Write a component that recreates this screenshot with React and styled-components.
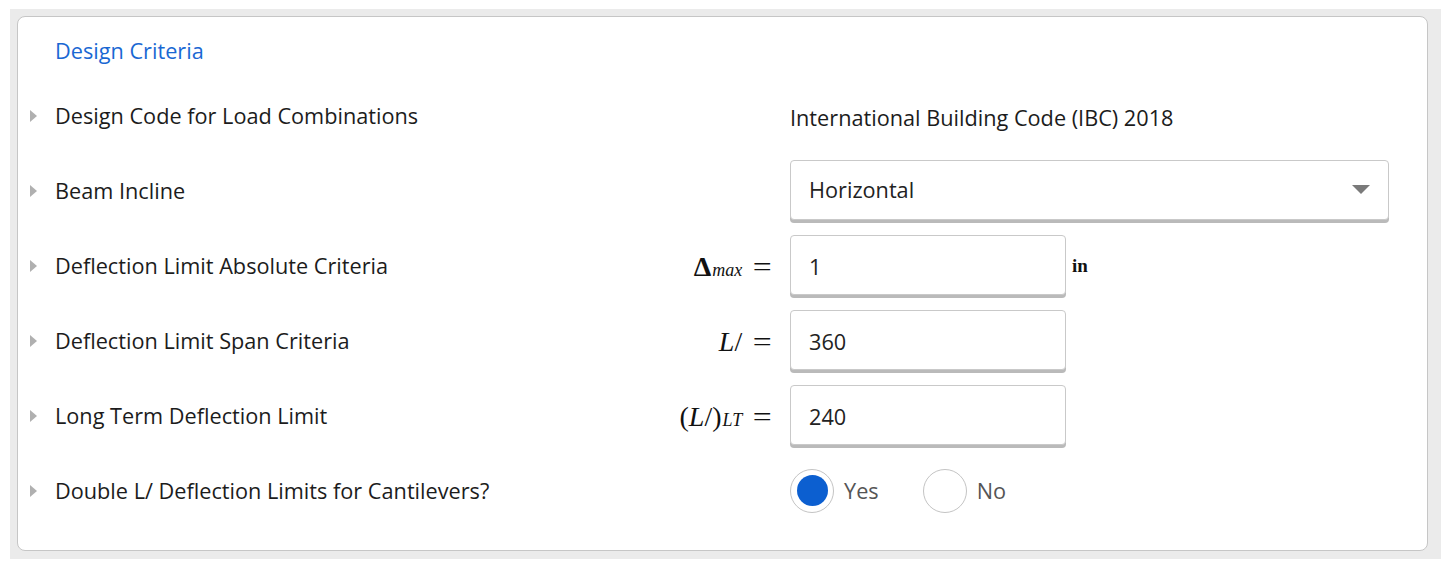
import React from "react";
import styled, { createGlobalStyle } from "styled-components";

const Global = createGlobalStyle`
  html, body { margin: 0; padding: 0; background: #fff; }
  body { font-family: "Open Sans", "Noto Sans", sans-serif; }
`;

const Outer = styled.div`
  margin: 9px 0 0 10px;
  width: 1431px;
  height: 550px;
  box-sizing: border-box;
  background: #ebebeb;
  padding: 7px 13px 8px 7px;
`;

const Card = styled.section`
  box-sizing: border-box;
  height: 535px;
  background: #fff;
  border: 1px solid #c6c6c6;
  border-radius: 8px;
  padding: 19px 38px 0 0;
`;

const Title = styled.h2`
  margin: 0 0 12px 37px;
  font-size: 21.7px;
  line-height: 30px;
  font-weight: 400;
  color: #1a68d3;
`;

const Row = styled.div`
  display: grid;
  grid-template-columns: 37px 517px 218px 599px;
  height: 75px;
  align-items: center;
`;

const Arrow = styled.span`
  justify-self: start;
  margin-left: 12px;
  width: 0;
  height: 0;
  border-top: 6px solid transparent;
  border-bottom: 6px solid transparent;
  border-left: 7px solid #b0b0b0;
`;

const Label = styled.div`
  font-size: 21.7px;
  color: #1c1c1c;
  line-height: 28px;
`;

const Math = styled.div`
  justify-self: end;
  margin-right: 18px;
  font-family: "Liberation Serif", "DejaVu Serif", serif;
  font-size: 28px;
  color: #111;
  white-space: nowrap;
  display: flex;
  align-items: baseline;
  margin-top: 2px;
`;

const Ital = styled.i`
  font-style: italic;
`;

const Sub = styled.sub`
  font-size: 18px;
  font-style: italic;
  vertical-align: -5px;
  line-height: 0;
  margin-left: 1px;
`;

const Eq = styled.span`
  margin-left: 14px;
  display: inline-block;
  transform: scaleX(1.2);
  transform-origin: right center;
`;

const Control = styled.div`
  grid-column: 4;
  display: flex;
  align-items: center;
`;

const ValueText = styled.div`
  font-size: 21.7px;
  color: #1c1c1c;
  margin-top: 4px;
`;

const Box = styled.div`
  box-sizing: border-box;
  width: ${(p) => p.$w}px;
  height: 60px;
  border: 1px solid #c9c9c9;
  border-radius: 4px;
  box-shadow: 0 3px 0 #bababa;
  background: #fff;
  display: flex;
  align-items: center;
  justify-content: space-between;
  padding: 0 18px 0 18px;
  font-size: 21.7px;
  color: #222;
  margin-top: ${(p) => p.$mt || 0}px;
`;

const BoxText = styled.span`
  padding-top: ${(p) => p.$pt || 0}px;
`;

const Caret = styled.span`
  width: 0;
  height: 0;
  border-left: 9px solid transparent;
  border-right: 9px solid transparent;
  border-top: 9px solid #7a7a7a;
`;

const Unit = styled.span`
  font-family: "Liberation Serif", "DejaVu Serif", serif;
  font-weight: 700;
  font-size: 19px;
  color: #111;
  margin-left: 6px;
  align-self: flex-start;
  margin-top: 18px;
`;

const RadioGroup = styled.div`
  display: flex;
  align-items: center;
`;

const RadioOpt = styled.label`
  display: flex;
  align-items: center;
  margin-right: 44px;
  font-size: 21.7px;
  color: #555;
`;

const Circle = styled.span`
  box-sizing: border-box;
  width: 44px;
  height: 44px;
  border-radius: 50%;
  border: 1px solid #c4c4c4;
  background: #fff;
  display: flex;
  align-items: center;
  justify-content: center;
  margin-right: 10px;
  &::after {
    content: "";
    display: ${(p) => (p.$checked ? "block" : "none")};
    width: 31px;
    height: 31px;
    border-radius: 50%;
    background: #0c5fd0;
  }
`;

const rows = [
  { label: "Design Code for Load Combinations", kind: "text", value: "International Building Code (IBC) 2018" },
  { label: "Beam Incline", kind: "select", value: "Horizontal" },
  {
    label: "Deflection Limit Absolute Criteria",
    kind: "input",
    value: "1",
    unit: "in",
    math: (
      <>
        <b>Δ</b>
        <Sub>max</Sub>
        <Eq>=</Eq>
      </>
    ),
  },
  {
    label: "Deflection Limit Span Criteria",
    kind: "input",
    value: "360",
    math: (
      <>
        <Ital>L</Ital>/<Eq>=</Eq>
      </>
    ),
  },
  {
    label: "Long Term Deflection Limit",
    kind: "input",
    value: "240",
    math: (
      <>
        (<Ital>L</Ital>/)<Sub>LT</Sub>
        <Eq>=</Eq>
      </>
    ),
  },
  { label: "Double L/ Deflection Limits for Cantilevers?", kind: "radio" },
];

export default function App() {
  return (
    <>
      <Global />
      <Outer>
        <Card>
          <Title>Design Criteria</Title>
          {rows.map((r) => (
            <Row key={r.label}>
              <Arrow />
              <Label>{r.label}</Label>
              {r.math ? <Math>{r.math}</Math> : <span />}
              <Control>
                {r.kind === "text" && <ValueText>{r.value}</ValueText>}
                {r.kind === "select" && (
                  <Box $w={599} $mt={-2}>
                    <BoxText>{r.value}</BoxText>
                    <Caret />
                  </Box>
                )}
                {r.kind === "input" && (
                  <>
                    <Box $w={276} $mt={-2}>
                      <BoxText $pt={4}>{r.value}</BoxText>
                    </Box>
                    {r.unit && <Unit>{r.unit}</Unit>}
                  </>
                )}
                {r.kind === "radio" && (
                  <RadioGroup>
                    <RadioOpt>
                      <Circle $checked />
                      Yes
                    </RadioOpt>
                    <RadioOpt>
                      <Circle />
                      No
                    </RadioOpt>
                  </RadioGroup>
                )}
              </Control>
            </Row>
          ))}
        </Card>
      </Outer>
    </>
  );
}
